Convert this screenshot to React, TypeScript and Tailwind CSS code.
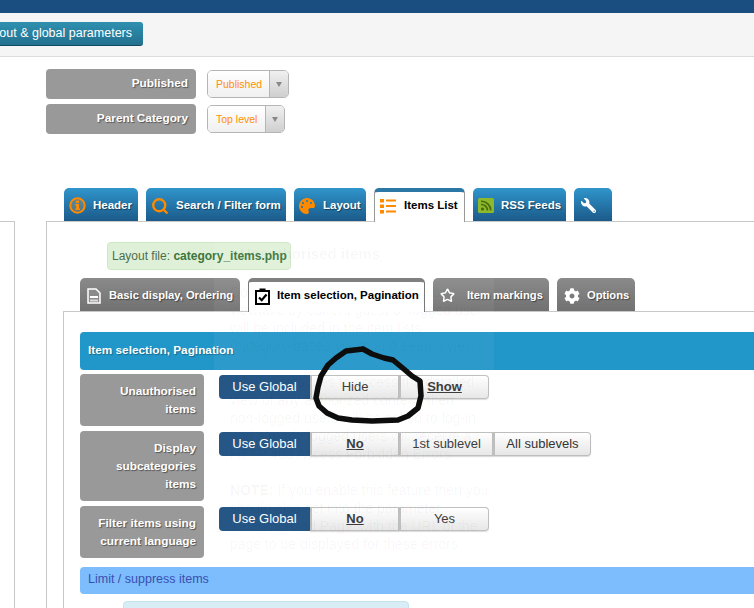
import { Search, Star } from "lucide-react";
import { FaCog, FaPalette, FaWrench } from "react-icons/fa";

const shadow = "[text-shadow:1px_1px_1px_rgba(0,0,0,0.45)]";

function InfoIcon() {
  return (
    <svg width="17" height="17" viewBox="0 0 17 17" className="shrink-0">
      <circle cx="8.5" cy="8.5" r="7.2" fill="#e9a24c" fillOpacity="0.25" stroke="#ff8a00" strokeWidth="2" />
      <rect x="7" y="3.6" width="3" height="2.4" fill="#ff8a00" />
      <path d="M6.2 7h3.8v4.4h1v1.6H6.2v-1.6h1V8.6h-1z" fill="#ff8a00" />
    </svg>
  );
}

function ListIcon() {
  return (
    <svg width="16" height="15" viewBox="0 0 16 15" className="shrink-0">
      <g fill="#ff8a00">
        <rect x="0" y="0" width="4" height="3.5" />
        <rect x="0" y="5.5" width="4" height="3.5" />
        <rect x="0" y="11" width="4" height="3.5" />
        <rect x="6" y="0.5" width="10" height="2" />
        <rect x="6" y="6" width="10" height="2" />
        <rect x="6" y="11.5" width="10" height="2" />
      </g>
    </svg>
  );
}

function RssIcon() {
  return (
    <svg width="16" height="16" viewBox="0 0 16 16" className="shrink-0">
      <rect width="16" height="15" rx="1.5" fill="#8cb82b" />
      <circle cx="4.5" cy="11" r="1.6" fill="#47690f" />
      <path d="M3 6.5a6 6 0 0 1 6.5 6M3 3.2a9.5 9.5 0 0 1 9.8 9.3" fill="none" stroke="#47690f" strokeWidth="1.6" />
    </svg>
  );
}

function PageIcon() {
  return (
    <svg width="14" height="16" viewBox="0 0 14 16" className="shrink-0">
      <path d="M1 1h8l4 4v10H1z" fill="#8a8a8a" stroke="#fff" strokeWidth="1.5" />
      <rect x="3" y="8" width="8" height="2" fill="#fff" />
      <rect x="3" y="11.5" width="8" height="2" fill="#dcdcdc" />
    </svg>
  );
}

function ClipboardIcon() {
  return (
    <svg width="15" height="17" viewBox="0 0 15 17" className="shrink-0">
      <rect x="1" y="3" width="13" height="13" fill="#fff" stroke="#000" strokeWidth="2" />
      <rect x="4.5" y="0.5" width="6" height="3.5" fill="#000" />
      <path d="M4 9.5l2.7 2.7L11.5 6.5" fill="none" stroke="#000" strokeWidth="2.2" />
    </svg>
  );
}

function MainTab({ label, icon, active, w }: { label?: string; icon: React.ReactNode; active?: boolean; w: string }) {
  if (active) {
    return (
      <div className={`${w} h-[34px] relative z-10 -mb-px flex items-center gap-[8px] pl-[5px] pb-[2px] rounded-t-[5px] bg-white border-x border-[#999] border-t-[4px] border-t-[#2b78a6] text-black text-[11.5px] font-bold`}>
        {icon}
        <span>{label}</span>
      </div>
    );
  }
  return (
    <div className={`${w} h-[33px] flex items-center gap-[7px] pl-[5px] pt-[2px] rounded-t-[5px] bg-gradient-to-b from-[#3096cc] to-[#1b5a8a] text-white text-[11.5px] font-bold ${shadow}`}>
      {icon}
      {label && <span>{label}</span>}
    </div>
  );
}

function SubTab({ label, icon, active, w, gap }: { label: string; icon: React.ReactNode; active?: boolean; w: string; gap: string }) {
  if (active) {
    return (
      <div className={`${w} h-[34px] relative z-10 -mb-px flex items-center ${gap} pl-[6px] pb-[2px] rounded-t-[5px] bg-white border-x border-[#777] border-t-[4px] border-t-[#808080] text-black text-[11.5px] font-bold`}>
        {icon}
        <span>{label}</span>
      </div>
    );
  }
  return (
    <div className={`${w} h-[33px] flex items-center ${gap} pl-[7px] pt-[2px] rounded-t-[5px] bg-gradient-to-b from-[#8a8a8a] to-[#717171] text-white text-[11.2px] font-bold ${shadow}`}>
      {icon}
      <span>{label}</span>
    </div>
  );
}

function Seg({ label, w, selected, strong }: { label: string; w: string; selected?: boolean; strong?: boolean }) {
  if (selected) {
    return (
      <div className={`${w} h-[24px] flex items-center justify-center bg-[#1a4d80] text-white text-[13px] rounded-l-[4px]`}>
        {label}
      </div>
    );
  }
  return (
    <div className={`${w} h-[24px] flex items-center justify-center bg-gradient-to-b from-white to-[#e6e6e6] border border-l-2 border-[#bdbdbd] last:rounded-r-[4px] shadow-[0_1px_1px_rgba(0,0,0,0.15)] text-[#333] text-[13px] ${strong ? "font-bold underline" : ""}`}>
      {label}
    </div>
  );
}

function ParamRow({ lines, h, children }: { lines: string[]; h: string; children: React.ReactNode }) {
  return (
    <div className="flex gap-[15px]">
      <div className={`w-[124px] ${h} bg-[#999] rounded-[4px] pr-[8px] flex flex-col justify-center items-end text-white font-bold text-[11.8px] leading-[18px] ${shadow}`}>
        {lines.map((l) => (
          <span key={l}>{l}</span>
        ))}
      </div>
      <div className="flex pt-px items-start">{children}</div>
    </div>
  );
}

function TopSelect({ label, w }: { label: string; w: string }) {
  return (
    <div className={`${w} h-[28px] flex border border-[#b5b5b5] rounded-[5px] overflow-hidden`}>
      <div className="flex-1 flex items-center pl-[8px] pt-px bg-gradient-to-b from-white to-[#f0f0f0] text-[#ff9000] text-[10.5px]">{label}</div>
      <div className="w-[19px] flex items-center justify-center border-l border-[#b5b5b5] bg-gradient-to-b from-[#f0f0f0] to-[#cfcfcf]">
        <span className="w-0 h-0 border-x-[3.5px] border-x-transparent border-t-[5px] border-t-[#888]" />
      </div>
    </div>
  );
}

export default function App() {
  return (
    <div className="relative w-[754px] h-[608px] overflow-hidden bg-white font-['Liberation_Sans',Arial,sans-serif]">
      {/* top bar + toolbar */}
      <div className="h-[13px] bg-[#1a4d80]" />
      <div className="h-[44px] bg-[#f5f5f5] border-b border-[#dddddd] pt-[9px]">
        <div className="w-[143px] overflow-hidden flex justify-end pb-[2px]">
          <div className="shrink-0 h-[24px] px-[11px] flex items-center whitespace-nowrap rounded-[3px] bg-gradient-to-b from-[#2f90b0] to-[#23708f] border-b border-[#134a63] text-white text-[12.5px]">
            Layout &amp; global parameters
          </div>
        </div>
      </div>

      {/* basic params */}
      <div className="ml-[46px] mt-[12px] flex flex-col gap-[5px]">
        <div className="flex gap-[11px] items-center">
          <div className={`w-[150px] h-[30px] bg-[#999] rounded-[4px] flex items-center justify-end pr-[8px] text-white font-bold text-[11.8px] ${shadow}`}>
            Published
          </div>
          <TopSelect label="Published" w="w-[82px]" />
        </div>
        <div className="flex gap-[11px] items-center">
          <div className={`w-[150px] h-[30px] bg-[#999] rounded-[4px] flex items-center justify-end pr-[8px] text-white font-bold text-[11.8px] ${shadow}`}>
            Parent Category
          </div>
          <TopSelect label="Top level" w="w-[78px]" />
        </div>
      </div>

      {/* main tabs */}
      <div className="ml-[64px] mt-[54px] flex gap-[8px] items-end relative">
        <MainTab w="w-[74px]" label="Header" icon={<InfoIcon />} />
        <MainTab w="w-[140px]" label="Search / Filter form" icon={<Search size={18} strokeWidth={3.2} className="text-[#ff8a00] shrink-0" />} />
        <MainTab w="w-[72px]" label="Layout" icon={<FaPalette size={16} className="text-[#ff8a00] shrink-0 mr-px" />} />
        <MainTab w="w-[91px]" label="Items List" active icon={<ListIcon />} />
        <MainTab w="w-[93px]" label="RSS Feeds" icon={<RssIcon />} />
        <MainTab w="w-[38px]" icon={<FaWrench size={15} className="text-white shrink-0 ml-[2px] -scale-x-100" />} />
      </div>

      <div className="flex h-[400px]">
        <div className="w-[15px] shrink-0 border-t border-r border-[#c8c8c8]" />
        <div className="ml-[31px] w-[900px] shrink-0 border-t border-l border-[#c8c8c8] pl-[16px]">
          {/* layout file note */}
          <div className="ml-[44px] mt-[20px] w-[184px] h-[28px] flex items-center pl-[4px] bg-[#dff0d8] border border-[#cfe6c4] rounded-[4px] text-[12px] text-[#4b6f4b] whitespace-nowrap">
            Layout file:&nbsp;<b className="text-[#3c763d]">category_items.php</b>
          </div>

          {/* sub tabs */}
          <div className="ml-[17px] mt-[8px] flex gap-[8px] items-end">
            <SubTab w="w-[160px]" label="Basic display, Ordering" gap="gap-[8px]" icon={<PageIcon />} />
            <SubTab w="w-[177px]" label="Item selection, Pagination" gap="gap-[7px]" active icon={<ClipboardIcon />} />
            <SubTab w="w-[116px]" label="Item markings" gap="gap-[12px]" icon={<Star size={15} strokeWidth={2.4} className="text-white shrink-0" />} />
            <SubTab w="w-[78px]" label="Options" gap="gap-[7px]" icon={<FaCog size={16} className="text-white shrink-0" />} />
          </div>

          <div className="border-t border-l border-[#c8c8c8] pl-[16px] pt-[20px] h-[300px]">
            <div className="h-[38px] bg-[#2196c9] rounded-l-[4px] flex items-center pl-[8px] text-white font-bold text-[11.8px] [text-shadow:1px_1px_1px_rgba(0,0,0,0.3)]">
              Item selection, Pagination
            </div>

            <div className="mt-[4px] flex flex-col gap-[5px]">
              <ParamRow lines={["Unauthorised", "items"]} h="h-[52px]">
                <Seg label="Use Global" w="w-[91px]" selected />
                <Seg label="Hide" w="w-[89px]" />
                <Seg label="Show" w="w-[90px]" strong />
              </ParamRow>
              <ParamRow lines={["Display", "subcategories", "items"]} h="h-[70px]">
                <Seg label="Use Global" w="w-[91px]" selected />
                <Seg label="No" w="w-[89px]" strong />
                <Seg label="1st sublevel" w="w-[94px]" />
                <Seg label="All sublevels" w="w-[98px]" />
              </ParamRow>
              <ParamRow lines={["Filter items using", "current language"]} h="h-[52px]">
                <Seg label="Use Global" w="w-[91px]" selected />
                <Seg label="No" w="w-[89px]" strong />
                <Seg label="Yes" w="w-[90px]" />
              </ParamRow>
            </div>

            <div className="mt-[9px] h-[27px] pb-[2px] bg-[#7dbdfd] rounded-l-[4px] flex items-center pl-[8px] text-[#3a4fb0] text-[12.5px]">
              Limit / suppress items
            </div>
            <div className="ml-[43px] mt-[7px] w-[286px] h-[30px] bg-[#d9edf7] border border-[#c4e3ea] rounded-[4px]" />
          </div>
        </div>
      </div>

      {/* scribble drawn over the screenshot */}
      <svg className="absolute left-0 top-0 pointer-events-none" width="754" height="608" viewBox="0 0 754 608">
        <path
          d="M363 349 L346 351 L336 358 L328 365 L321 376 L318 387 L316 398 L319 406 L327 413 L338 418 L352 420 L372 421 L398 420 L408 416 L418 408 L421 396 L420 381 L412 376 L405 370 L393 360 L384 358 L372 354 L363 349"
          fill="none"
          stroke="#000"
          strokeWidth="5.5"
          strokeLinejoin="round"
          strokeLinecap="round"
        />
      </svg>

      {/* faded tooltip lying over the form */}
      <div className="absolute left-[214px] top-[237px] w-[280px] h-[325px] bg-white/5 rounded-[4px] pt-[8px] pl-[16px] text-[14px] leading-[18px] text-black/[0.04] pointer-events-none">
        <div className="pl-[10px] font-bold text-[15px] mb-[20px]">Unauthorised items</div>
        <div className="whitespace-nowrap">Content items, not authorized to be</div>
        <div className="whitespace-nowrap">viewable by current guest or logged user</div>
        <div className="whitespace-nowrap">will be included in the item lists</div>
        <div className="whitespace-nowrap">(category-based views and search view).</div>
        <div className="h-[18px]" />
        <div className="whitespace-nowrap">When users tries to access the detailed</div>
        <div className="whitespace-nowrap">view of any authorized content, then</div>
        <div className="whitespace-nowrap">non-logged users will be asked to log-in,</div>
        <div className="whitespace-nowrap">and already logged users will receive a</div>
        <div className="whitespace-nowrap">HTTP 403 Access Forbidden Errors.</div>
        <div className="h-[18px]" />
        <div className="whitespace-nowrap"><b>NOTE:</b> If you enable this feature then you</div>
        <div className="whitespace-nowrap">should also set into the parameter</div>
        <div className="whitespace-nowrap">'Unauthorized Page' with the URL of the</div>
        <div className="whitespace-nowrap">page to be displayed for these errors</div>
      </div>
    </div>
  );
}
